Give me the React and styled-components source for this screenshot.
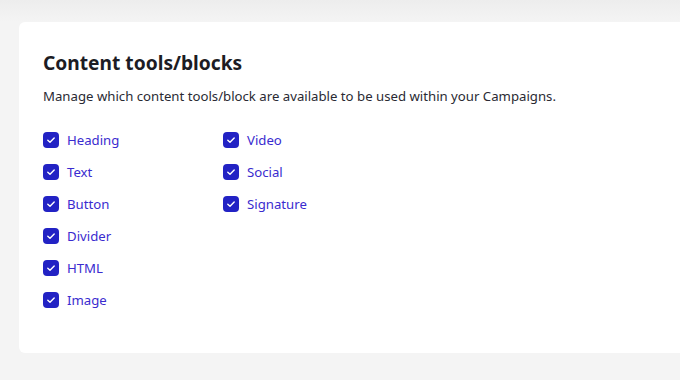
import React from "react";
import styled, { createGlobalStyle } from "styled-components";

const Global = createGlobalStyle`
  html, body { margin: 0; padding: 0; }
  body {
    background: linear-gradient(#ededed 0px, #f4f4f4 22px, #f4f4f4 100%);
    font-family: "Noto Sans", "Open Sans", sans-serif;
    min-height: 380px;
    overflow: hidden;
  }
`;

const Page = styled.div`
  padding: 22px 0 0 19px;
  height: 380px;
  box-sizing: border-box;
`;

const Card = styled.section`
  background: #fff;
  border-radius: 6px 0 0 6px;
  padding: 27px 24px 37px 24px;
  height: 331px;
  box-sizing: border-box;
`;

const Title = styled.h2`
  margin: 0;
  font-size: 19.2px;
  line-height: 28px;
  font-weight: 700;
  color: #1c1c24;
`;

const Description = styled.p`
  margin: 9px 0 0 0;
  font-size: 13.2px;
  line-height: 20px;
  color: #2a2a33;
`;

const Columns = styled.div`
  display: flex;
  margin-top: 18px;
`;

const Column = styled.div`
  display: flex;
  flex-direction: column;
  width: ${(p) => p.$width || "auto"};
`;

const Row = styled.label`
  display: flex;
  align-items: center;
  height: 32px;
  gap: 8px;
  cursor: pointer;
`;

const Box = styled.span`
  width: 16px;
  height: 16px;
  border-radius: 4px;
  background: #2222c4;
  display: flex;
  align-items: center;
  justify-content: center;
  flex-shrink: 0;
`;

const Label = styled.span`
  font-size: 13.2px;
  color: #3a2ccf;
`;

const Check = () => (
  <svg width="10" height="10" viewBox="0 0 10 10">
    <path d="M1.8 5.2 L4 7.2 L8.2 2.9" fill="none" stroke="#fff" strokeWidth="1.4" strokeLinecap="round" strokeLinejoin="round" />
  </svg>
);

const Item = ({ label }) => (
  <Row>
    <Box><Check /></Box>
    <Label>{label}</Label>
  </Row>
);

export default function App() {
  return (
    <>
      <Global />
      <Page>
        <Card>
          <Title>Content tools/blocks</Title>
          <Description>
            Manage which content tools/block are available to be used within your Campaigns.
          </Description>
          <Columns>
            <Column $width="180px">
              {["Heading", "Text", "Button", "Divider", "HTML", "Image"].map((l) => (
                <Item key={l} label={l} />
              ))}
            </Column>
            <Column>
              {["Video", "Social", "Signature"].map((l) => (
                <Item key={l} label={l} />
              ))}
            </Column>
          </Columns>
        </Card>
      </Page>
    </>
  );
}
